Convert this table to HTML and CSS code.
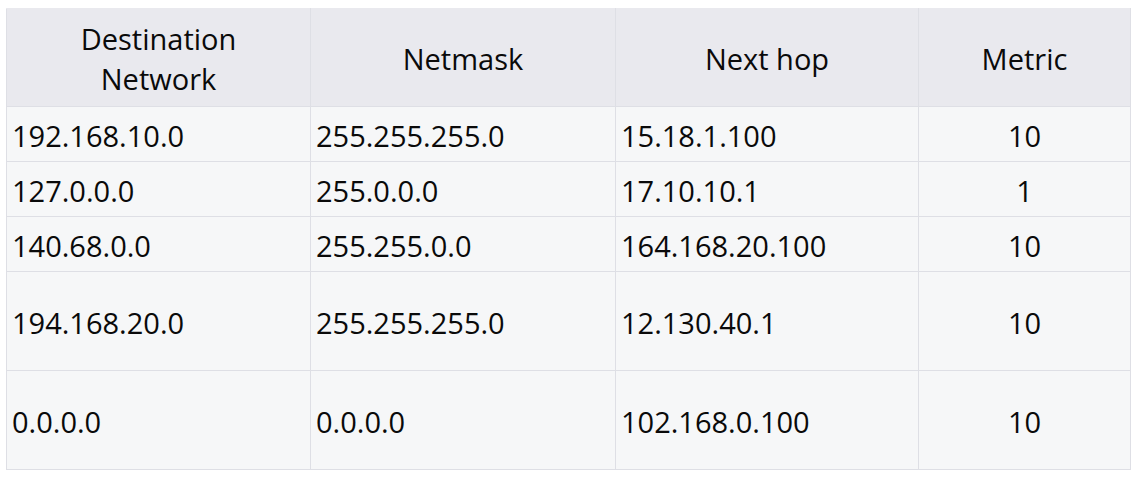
FILE: index.html
```html
<!DOCTYPE html>
<html lang="en">
<head>
<meta charset="utf-8">
<title>Routing table</title>
<link rel="stylesheet" href="styles.css">
</head>
<body>
<div class="page">
  <table class="routes">
    <colgroup>
      <col class="c1"><col class="c2"><col class="c3"><col class="c4">
    </colgroup>
    <thead>
      <tr class="head">
        <th>Destination<br>Network</th>
        <th>Netmask</th>
        <th>Next hop</th>
        <th>Metric</th>
      </tr>
    </thead>
    <tbody>
      <tr class="short"><td>192.168.10.0</td><td>255.255.255.0</td><td>15.18.1.100</td><td class="num">10</td></tr>
      <tr class="short"><td>127.0.0.0</td><td>255.0.0.0</td><td>17.10.10.1</td><td class="num">1</td></tr>
      <tr class="short"><td>140.68.0.0</td><td>255.255.0.0</td><td>164.168.20.100</td><td class="num">10</td></tr>
      <tr class="tall"><td>194.168.20.0</td><td>255.255.255.0</td><td>12.130.40.1</td><td class="num">10</td></tr>
      <tr class="tall"><td>0.0.0.0</td><td>0.0.0.0</td><td>102.168.0.100</td><td class="num">10</td></tr>
    </tbody>
  </table>
</div>
</body>
</html>
```

FILE: styles.css
```css
html, body {
  margin: 0;
  padding: 0;
  background: #ffffff;
}

.page {
  padding: 8px 7px 0 6px;
}

.routes {
  border-collapse: collapse;
  table-layout: fixed;
  width: 1124px;
  font-family: "Open Sans", "Liberation Sans", sans-serif;
  font-size: 29px;
  color: #0a0a0a;
}

.c1 { width: 304px; }
.c2 { width: 305px; }
.c3 { width: 303px; }
.c4 { width: 212px; }

.routes th,
.routes td {
  border: 1px solid #dedfe5;
  padding: 0 5px;
  vertical-align: middle;
  white-space: nowrap;
}

.routes th {
  background: #e9e9ee;
  font-weight: 400;
  text-align: center;
  line-height: 40px;
  padding-top: 2px;
}

.routes td {
  background: #f6f7f8;
  text-align: left;
  line-height: 36px;
  padding-top: 3px;
}

.routes td.num {
  text-align: center;
}

.routes tr.head { height: 98px; }
.routes tr.short { height: 55px; }
.routes tr.tall { height: 99px; }

.routes thead tr.head th { border-top-color: #e9e9ee; }
```
